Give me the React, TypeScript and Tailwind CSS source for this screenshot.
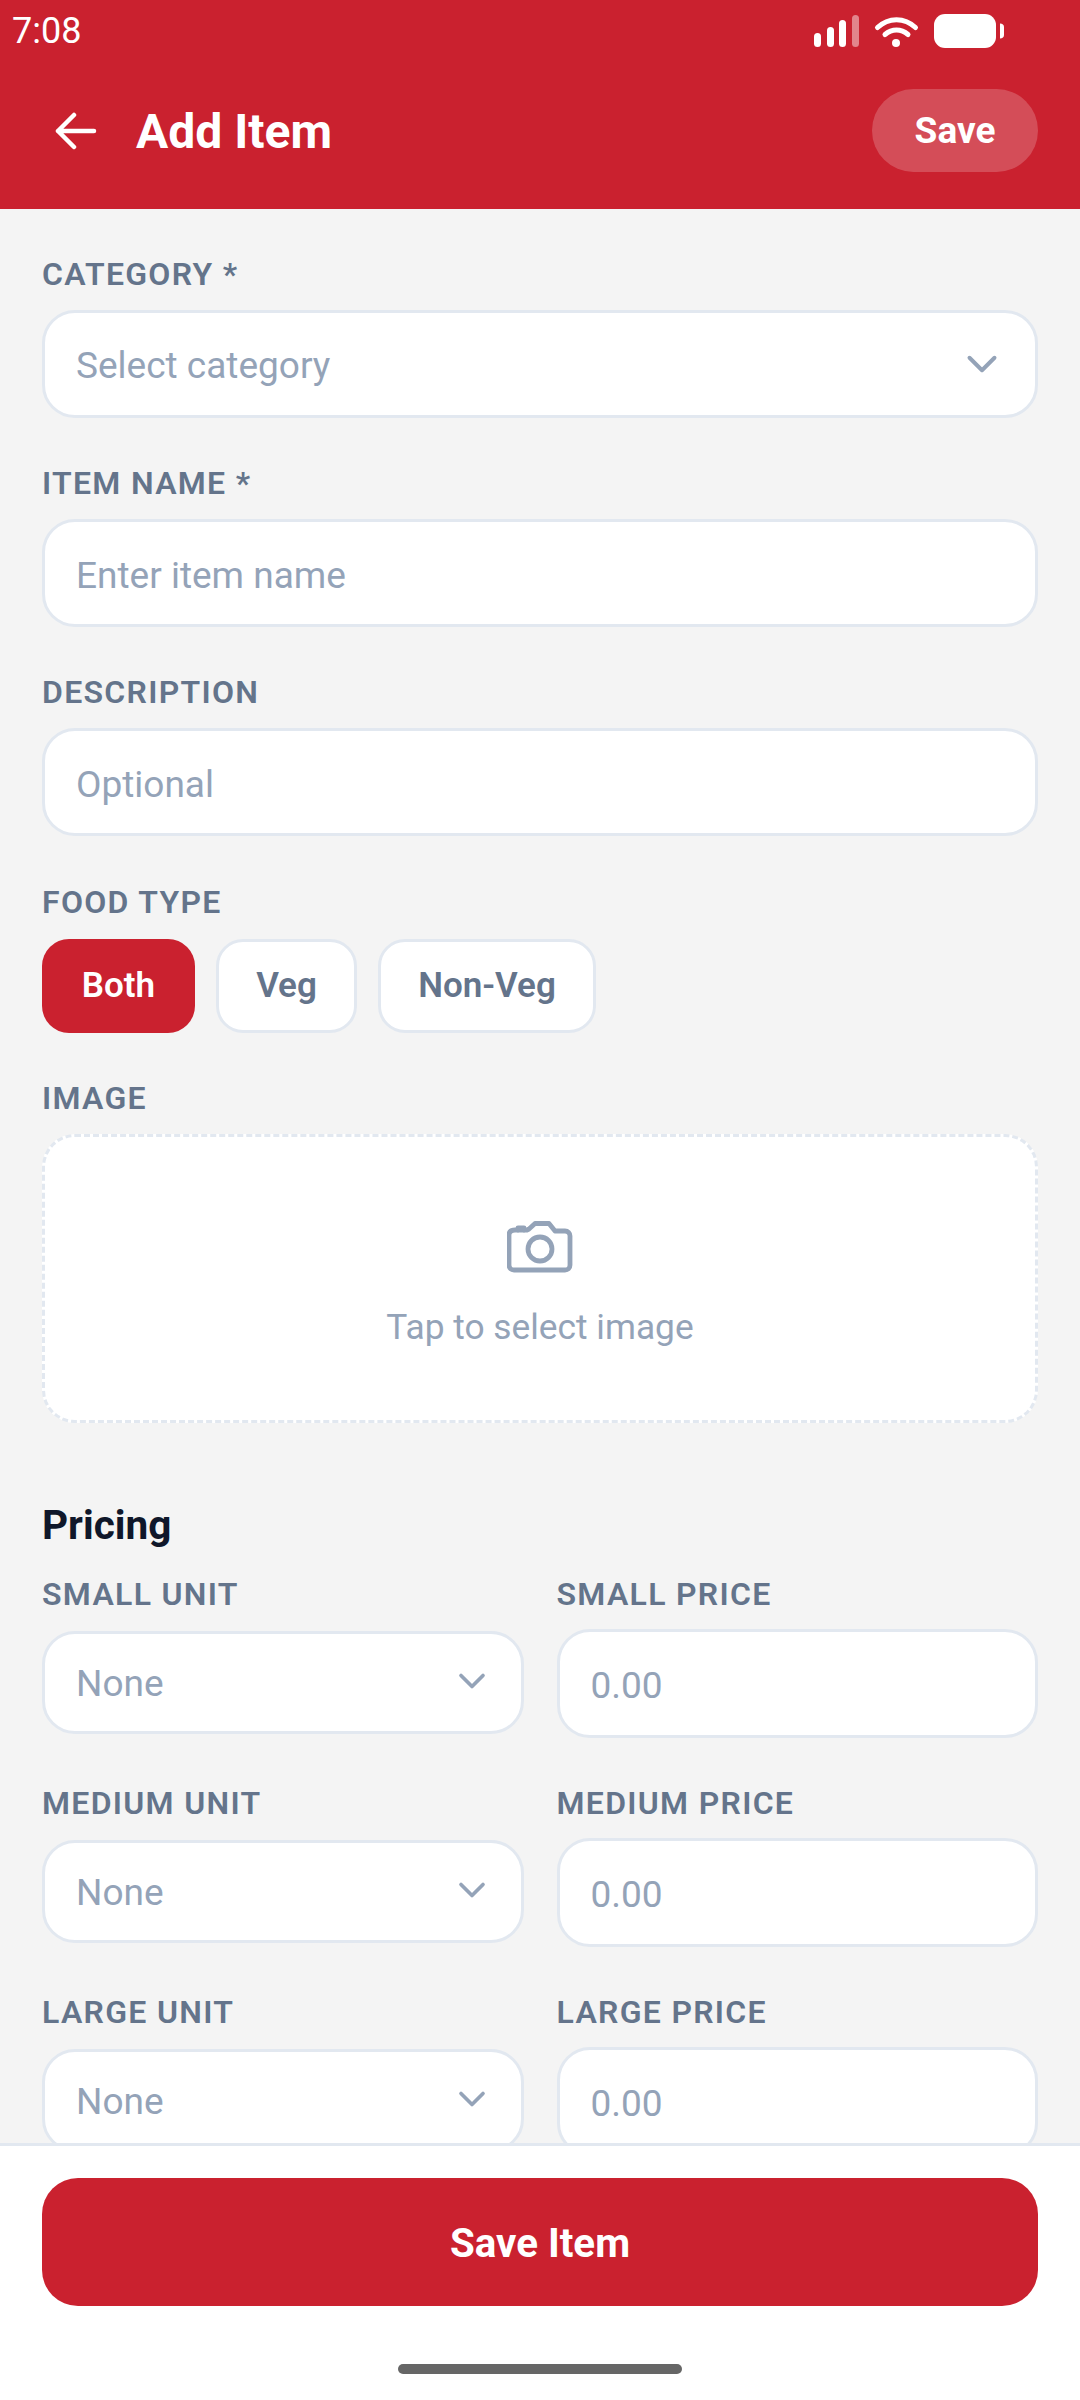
import React from "react";
import { ChevronDown } from "lucide-react";

const boxClass = "bg-white border-[3px] border-[#E2E8F0] rounded-[33px]";
const placeholderClass = "text-[37px] text-[#94A3B8]";

const Label = ({ children, className = "mb-[14px]" }: { children: React.ReactNode; className?: string }) => (
  <div className={`h-[44px] flex items-center text-[32px] font-semibold tracking-[1.3px] text-[#64748B] leading-none ${className}`}>
    {children}
  </div>
);

const StatusIcons = () => (
  <svg width="192" height="38" viewBox="815 12 192 38" fill="none">
    <g fill="#fff">
      <rect x="815" y="33" width="7" height="14" rx="3.5" />
      <rect x="828" y="27" width="7" height="20" rx="3.5" />
      <rect x="840" y="20" width="7" height="27" rx="3.5" />
      <rect x="853" y="15" width="7" height="32" rx="3.5" opacity="0.45" />
      <circle cx="897" cy="43" r="4" />
      <rect x="935" y="14" width="62" height="34" rx="11" />
      <path d="M1001 23.5c2.5 0 4 1.5 4 3.5v8c0 2-1.500 3.500-4 3.500z" />
    </g>
    <g stroke="#fff" strokeWidth="5" strokeLinecap="round">
      <path d="M878.5 27.5c11-10.500 27-10.500 38 0" />
      <path d="M886 34.500c7-6 16-6 23 0" />
    </g>
  </svg>
);

const CameraIcon = () => (
  <svg width="66" height="52" viewBox="0 0 66 52" fill="none" stroke="#94A3B8" strokeWidth="4.800" strokeLinejoin="round" strokeLinecap="round">
    <path d="M8 9h12l2-1 6-5.500h14l6 7.500h10c3 0 5 2 5 5v29c0 3-2 5-5 5H7c-3 0-5-2-5-5V14c0-3 2-5 6-5z" />
    <path d="M11 9V7h6v2" />
    <circle cx="33" cy="28" r="12" />
  </svg>
);

const Field = ({ label, placeholder }: { label: string; placeholder: string }) => (
  <div className="mb-[43px]">
    <Label>{label}</Label>
    <input
      placeholder={placeholder}
      className={`${boxClass} block w-full h-[108px] pl-[31px] pr-[32px] pt-[4px] text-[37px] text-[#0F172A] placeholder:text-[#94A3B8] outline-none`}
    />
  </div>
);

const PriceRow = ({ size }: { size: string }) => (
  <div className="grid grid-cols-2 gap-x-[33px] mb-[43px]">
    <div>
      <Label className="mb-[15px]">{size} UNIT</Label>
      <div className={`${boxClass} h-[103px] pl-[31px] pr-[27px] flex items-center justify-between`}>
        <span className={`${placeholderClass} pt-[2px]`}>None</span>
        <ChevronDown size={44} strokeWidth={2} color="#94A3B8" className="-mt-[3px]" />
      </div>
    </div>
    <div>
      <Label className="mb-[13px]">{size} PRICE</Label>
      <input
        placeholder="0.00"
        className={`${boxClass} block w-full h-[109px] pl-[31px] pr-[32px] pt-[4px] text-[37px] placeholder:text-[#94A3B8] outline-none`}
      />
    </div>
  </div>
);

export default function App() {
  return (
    <div className="w-[1080px] h-[2400px] flex flex-col bg-[#F4F4F4] overflow-hidden font-['Roboto',sans-serif]">
      {/* Header */}
      <header className="h-[209px] shrink-0 bg-[#CA212F] text-white">
        <div className="h-[62px] pl-[12px] pr-[74px] flex items-center justify-between">
          <span className="text-[36px] leading-none">7:08</span>
          <StatusIcons />
        </div>
        <div className="mt-[27px] h-[83px] pl-[55px] pr-[42px] flex items-center">
          <svg width="42" height="38" viewBox="0 0 42 38" fill="none" stroke="#fff" strokeWidth="4.500" strokeLinecap="round" strokeLinejoin="round">
            <path d="M3 19h36M19 3L3 19l16 16" />
          </svg>
          <span className="ml-[39px] pt-[2px] text-[48px] font-bold leading-none">Add Item</span>
          <button className="ml-auto w-[166px] h-[83px] pt-[1px] rounded-full bg-white/20 text-[37px] font-bold">Save</button>
        </div>
      </header>

      {/* Form */}
      <main className="flex-1 min-h-0 overflow-hidden px-[42px] pt-[43px]">
        <div className="mb-[43px]">
          <Label>CATEGORY *</Label>
          <div className={`${boxClass} h-[108px] pl-[31px] pr-[28px] flex items-center justify-between`}>
            <span className={`${placeholderClass} pt-[3px]`}>Select category</span>
            <ChevronDown size={50} strokeWidth={1.9} color="#94A3B8" />
          </div>
        </div>
        <Field label="ITEM NAME *" placeholder="Enter item name" />
        <Field label="DESCRIPTION" placeholder="Optional" />

        <div className="mb-[43px]">
          <Label className="pt-[2px] mb-[16px]">FOOD TYPE</Label>
          <div className="flex gap-[21px] text-[35px] font-semibold">
            <button className="h-[94px] w-[153px] rounded-[27px] bg-[#CA212F] text-white">Both</button>
            <button className={`${boxClass} !rounded-[27px] h-[94px] w-[141px] text-[#64748B]`}>Veg</button>
            <button className={`${boxClass} !rounded-[27px] h-[94px] w-[218px] text-[#64748B]`}>Non-Veg</button>
          </div>
        </div>

        <div>
          <Label>IMAGE</Label>
          <div className="h-[289px] bg-white border-[3px] border-dashed border-[#E2E8F0] rounded-[33px] flex flex-col items-center pt-[84px]">
            <CameraIcon />
            <span className="mt-[32px] text-[35.3px] leading-[44px] text-[#94A3B8]">Tap to select image</span>
          </div>
        </div>

        <h2 className="mt-[77px] mb-[22px] text-[40.500px] leading-[50px] font-bold text-[#0F172A]">Pricing</h2>
        <PriceRow size="SMALL" />
        <PriceRow size="MEDIUM" />
        <PriceRow size="LARGE" />
      </main>

      {/* Footer */}
      <footer className="h-[257px] shrink-0 bg-white border-t-[3px] border-[#E2E8F0] px-[42px] pt-[32px] flex flex-col">
        <button className="h-[128px] w-full pt-[4px] rounded-[36px] bg-[#CA212F] text-white text-[40.3px] font-bold">Save Item</button>
        <div className="mt-[58px] mx-auto w-[284px] h-[10px] rounded-full bg-[#666666]" />
      </footer>
    </div>
  );
}
